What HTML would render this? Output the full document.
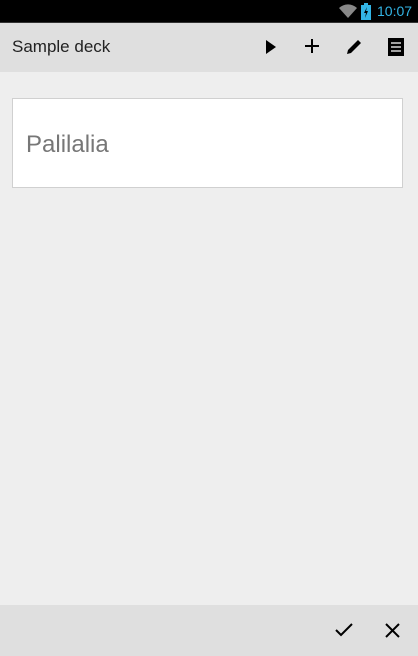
<!DOCTYPE html>
<html><head><style>
body{margin:0;width:418px;height:656px;background:#eeeeee;font-family:"Liberation Sans",sans-serif;position:relative;overflow:hidden}
.sb{position:absolute;left:0;top:0;width:418px;height:22px;background:#000}
.ab{position:absolute;left:0;top:22px;width:418px;height:49px;background:#dfdfdf;border-top:1px solid #333}
.title{position:absolute;left:12px;top:37px;font-size:17px;color:#222}
.card{position:absolute;left:12px;top:98px;width:389px;height:88px;background:#fff;border:1px solid #d0d0d0}
.card span{position:absolute;left:13px;top:32px;font-size:24px;color:#777}
.bb{position:absolute;left:0;top:605px;width:418px;height:51px;background:#dfdfdf}
svg{position:absolute}
</style></head><body>
<div class="sb"></div>
<svg style="left:338px;top:4px" width="20" height="15" viewBox="0 0 20 15"><path d="M1 4 A13 13 0 0 1 19 4 L10 14Z" fill="#888"/></svg>
<svg style="left:361px;top:3px" width="10" height="17"><rect x="3" y="0" width="4" height="2" fill="#33b5e5"/><rect x="0" y="2" width="10" height="15" fill="#33b5e5"/><path d="M6 4 L3 10 H5 L4 15 L7 8 H5Z" fill="#000"/></svg>
<div style="position:absolute;left:377px;top:3px;font-size:14px;color:#33b5e5">10:07</div>
<div class="ab"></div>
<div class="title">Sample deck</div>
<svg style="left:265px;top:40px" width="12" height="14"><path d="M1 0 L11 7 L1 14Z" fill="#000"/></svg>
<svg style="left:304px;top:38px" width="16" height="16"><path d="M8 1V15M1 8H15" stroke="#000" stroke-width="2"/></svg>
<svg style="left:345px;top:38px" width="18" height="18"><path d="M2 16 L3 12 L13 2 L16 5 L6 15Z" fill="#000"/></svg>
<svg style="left:388px;top:38px" width="16" height="18"><rect x="0" y="0" width="16" height="18" fill="#000"/><path d="M3 5H13M3 9H13M3 13H13" stroke="#fff" stroke-width="1.3"/></svg>
<div class="card"><span>Palilalia</span></div>
<div class="bb"></div>
<svg style="left:335px;top:623px" width="18" height="14"><path d="M1 7 L6 12 L17 1" stroke="#000" stroke-width="2" fill="none"/></svg>
<svg style="left:385px;top:623px" width="15" height="15"><path d="M1 1L14 14M14 1L1 14" stroke="#000" stroke-width="2"/></svg>
</body></html>
